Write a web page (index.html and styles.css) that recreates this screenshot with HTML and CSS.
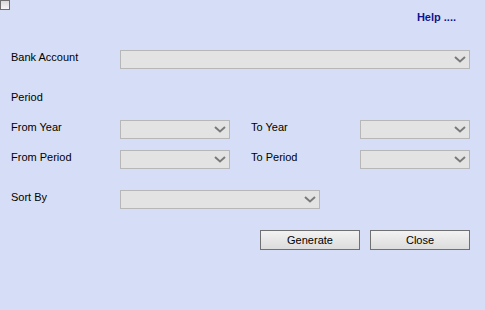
FILE: index.html
```html
<!DOCTYPE html>
<html>

<head>
    <meta charset="UTF-8">
    <link rel="stylesheet" href="styles.css">
    <title>Bank Report</title>
</head>

<body>
    <div class="report-form">
        <span class="tick"></span>
        <div class="help-line"><a class="help" href="#">Help ....</a></div>

        <div class="row row-bank">
            <label class="lbl">Bank Account</label>
            <div class="pick pick-wide">
                <select></select>
                <svg class="chev" width="12" height="7" viewBox="0 0 12 7"><path d="M1 1 L6 5.5 L11 1" /></svg>
            </div>
        </div>

        <div class="section">Period</div>

        <div class="row row-year">
            <label class="lbl">From Year</label>
            <div class="pick">
                <select></select>
                <svg class="chev" width="12" height="7" viewBox="0 0 12 7"><path d="M1 1 L6 5.5 L11 1" /></svg>
            </div>
            <label class="lbl lbl-to">To Year</label>
            <div class="pick">
                <select></select>
                <svg class="chev" width="12" height="7" viewBox="0 0 12 7"><path d="M1 1 L6 5.5 L11 1" /></svg>
            </div>
        </div>

        <div class="row row-period">
            <label class="lbl">From Period</label>
            <div class="pick">
                <select></select>
                <svg class="chev" width="12" height="7" viewBox="0 0 12 7"><path d="M1 1 L6 5.5 L11 1" /></svg>
            </div>
            <label class="lbl lbl-to">To Period</label>
            <div class="pick">
                <select></select>
                <svg class="chev" width="12" height="7" viewBox="0 0 12 7"><path d="M1 1 L6 5.5 L11 1" /></svg>
            </div>
        </div>

        <div class="row row-sort">
            <label class="lbl">Sort By</label>
            <div class="pick pick-mid">
                <select></select>
                <svg class="chev" width="12" height="7" viewBox="0 0 12 7"><path d="M1 1 L6 5.5 L11 1" /></svg>
            </div>
        </div>

        <div class="buttons">
            <input type="button" class="btn" value="Generate" />
            <input type="button" class="btn" value="Close" />
        </div>
    </div>
</body>

</html>
```

FILE: styles.css
```css
html,
body {
    margin: 0;
    height: 100%;
    background: #d6def7;
}

.report-form {
    font: 11px "Liberation Sans", Arial, Helvetica, sans-serif;
    color: #000;
    display: flex;
    flex-direction: column;
}

.tick {
    display: block;
    width: 8px;
    height: 8px;
    border: 1px solid #6f6f6f;
    background: linear-gradient(#dadada, #f7f7f7);
}

.help-line {
    display: flex;
    justify-content: flex-end;
    padding-right: 29px;
    line-height: 14px;
}

.help {
    color: #12128c;
    font-weight: bold;
    text-decoration: none;
}

.row {
    display: flex;
    align-items: flex-start;
    padding-left: 11px;
}

.row-bank {
    margin-top: 26px;
}

.row-year {
    margin-top: 15px;
}

.row-period {
    margin-top: 11px;
}

.row-sort {
    margin-top: 21px;
}

.section {
    margin-top: 21px;
    padding-left: 11px;
    line-height: 15px;
}

.lbl {
    width: 109px;
    line-height: 15px;
}

.lbl-to {
    width: 109px;
    margin-left: 21px;
}

.pick {
    position: relative;
    width: 110px;
    height: 19px;
}

.pick-wide {
    width: 350px;
}

.pick-mid {
    width: 200px;
}

.pick select {
    -webkit-appearance: none;
    appearance: none;
    box-sizing: border-box;
    width: 100%;
    height: 100%;
    margin: 0;
    border: 1px solid #b7b7b7;
    border-radius: 0;
    background: #e3e3e3;
    outline: none;
}

.chev {
    position: absolute;
    right: 4px;
    top: 6px;
    pointer-events: none;
}

.chev path {
    fill: none;
    stroke: #7a7a7a;
    stroke-width: 2;
}

.buttons {
    display: flex;
    justify-content: flex-end;
    gap: 10px;
    margin-top: 21px;
    padding-right: 15px;
}

.btn {
    box-sizing: border-box;
    width: 100px;
    height: 20px;
    margin: 0;
    padding: 0;
    border: 1px solid #707070;
    border-radius: 0;
    background: linear-gradient(#f2f2f2, #dcdcdc);
    color: #000;
    font: 11px "Liberation Sans", Arial, Helvetica, sans-serif;
}
```
